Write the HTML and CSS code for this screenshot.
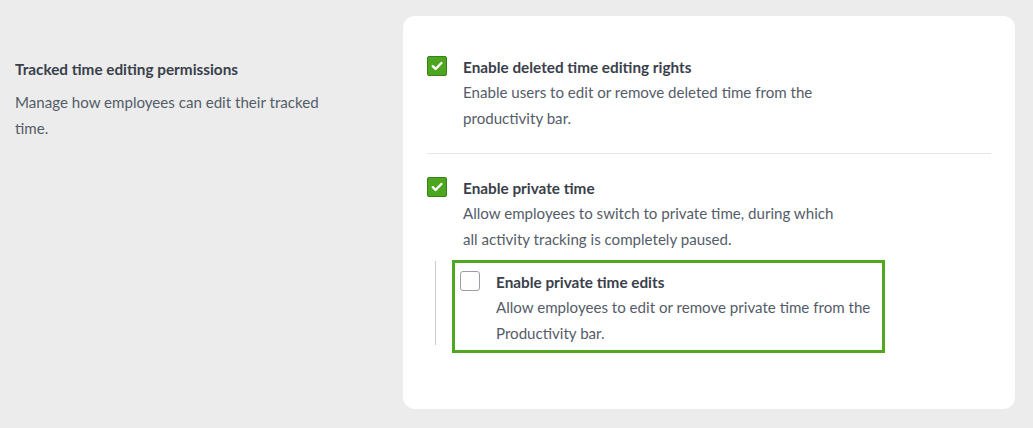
FILE: index.html
```html
<!DOCTYPE html>
<html>
<head>
<meta charset="utf-8">
<link rel="stylesheet" href="styles.css">
</head>
<body>
<div class="page">
  <div class="intro">
    <div class="intro-title">Tracked time editing permissions</div>
    <div class="intro-desc">Manage how employees can edit their tracked time.</div>
  </div>
  <div class="card">
    <div class="option">
      <span class="cb cb-on"><svg viewBox="0 0 20 20" width="20" height="20"><path d="M5.8 10.2l2.8 2.8 5.8-6" fill="none" stroke="#fff" stroke-width="2.4" stroke-linecap="round" stroke-linejoin="round"/></svg></span>
      <div class="opt-text">
        <div class="opt-title">Enable deleted time editing rights</div>
        <div class="opt-desc d1">Enable users to edit or remove deleted time from the productivity bar.</div>
      </div>
    </div>
    <div class="sep"></div>
    <div class="option">
      <span class="cb cb-on"><svg viewBox="0 0 20 20" width="20" height="20"><path d="M5.8 10.2l2.8 2.8 5.8-6" fill="none" stroke="#fff" stroke-width="2.4" stroke-linecap="round" stroke-linejoin="round"/></svg></span>
      <div class="opt-text">
        <div class="opt-title">Enable private time</div>
        <div class="opt-desc d2">Allow employees to switch to private time, during which all activity tracking is completely paused.</div>
      </div>
    </div>
    <div class="nested">
      <div class="rail"></div>
      <div class="highlight">
        <div class="option">
          <span class="cb cb-off"></span>
          <div class="opt-text">
            <div class="opt-title">Enable private time edits</div>
            <div class="opt-desc d3">Allow employees to edit or remove private time from the Productivity bar.</div>
          </div>
        </div>
      </div>
    </div>
  </div>
</div>
</body>
</html>
```
FILE: styles.css
```css
* { box-sizing: border-box; }
html, body { margin: 0; padding: 0; }
body {
  background: #ebeceb;
  font-family: "Lato", "Open Sans", sans-serif;
  color: #3c4350;
  width: 1033px;
  height: 428px;
  overflow: hidden;
}
.page {
  display: flex;
  padding: 16px 18px 19px 15px;
}
.intro {
  width: 388px;
  flex: none;
  padding-top: 41px;
}
.intro-title {
  font-weight: 700;
  font-size: 15.3px;
  line-height: 24px;
  color: #3a404b;
}
.intro-desc {
  margin-top: 8px;
  font-size: 15.1px;
  line-height: 26px;
  color: #555c69;
  width: 320px;
}
.card {
  flex: 1;
  background: #fff;
  border-radius: 12px;
  padding: 39px 24px 56px 24px;
  height: 393px;
}
.option {
  display: flex;
  gap: 16px;
}
.cb {
  flex: none;
  width: 20px;
  height: 20px;
  margin-top: 1px;
  border-radius: 2px;
  display: block;
}
.cb svg { display: block; }
.cb-on {
  background: #4ea51f;
  border: 1px solid #37801a;
}
.cb-on svg { margin: -1px; }
.cb-off {
  background: #fff;
  border: 1px solid #9a9ea4;
  border-radius: 3px;
}
.opt-title {
  font-weight: 700;
  font-size: 15.3px;
  line-height: 24px;
  color: #3a404b;
}
.opt-desc {
  font-size: 15.1px;
  line-height: 26px;
  color: #555c69;
}
.d1 { width: 375px; }
.d2 { width: 378px; }
.d3 { width: 385px; }
.sep {
  height: 1px;
  background: #e6e7e8;
  margin: 22px 0 22px;
}
.nested {
  display: flex;
  margin-top: 8px;
  margin-left: 8px;
}
.rail {
  width: 1px;
  background: #c9cbcd;
  margin: 1px 16px 8px 0;
  flex: none;
}
.highlight {
  width: 433px;
  border: 3px solid #52a720;
  padding: 7px 5px 4px 5px;
}
```
